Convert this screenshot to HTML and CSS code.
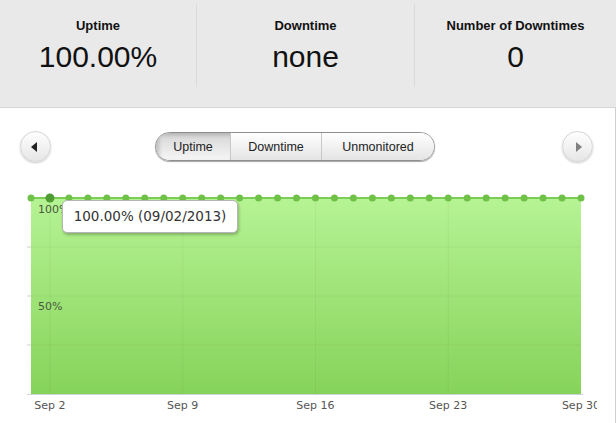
FILE: index.html
```html
<!DOCTYPE html>
<html lang="en">
<head>
    <meta charset="UTF-8">
    <title>Uptime report</title>
    <link rel="stylesheet" href="styles.css">
</head>
<body>

    <div class="stats">
        <div class="stat stat-first">
            <div class="stat-label">Uptime</div>
            <div class="stat-value">100.00%</div>
        </div>
        <div class="stat stat-mid">
            <div class="stat-label">Downtime</div>
            <div class="stat-value">none</div>
        </div>
        <div class="stat stat-last">
            <div class="stat-label">Number of Downtimes</div>
            <div class="stat-value">0</div>
        </div>
    </div>

    <div class="panel">
        <div class="toolbar">
            <span class="round-btn"><span class="arrow-left"></span></span>
            <div class="segments">
                <span class="seg seg-uptime active">Uptime</span>
                <span class="seg seg-down">Downtime</span>
                <span class="seg seg-unmon">Unmonitored</span>
            </div>
            <span class="round-btn"><span class="arrow-right"></span></span>
        </div>

        <div class="chart">
            <svg id="plot" width="597" height="238" viewBox="0 0 597 238"></svg>
            <div class="tooltip">100.00% (09/02/2013)</div>
        </div>
    </div>

    <script>
        // page y = svg y + 185
        var svg = document.getElementById("plot")
        var left = 31, right = 581, top_ = 12, bottom = 208
        var step = (right - left) / 29

        var html = ''
        html += '<defs><linearGradient id="fill" x1="0" y1="0" x2="0" y2="1">'
        html += '<stop offset="0" stop-color="#b6f394"/><stop offset="1" stop-color="#86d35a"/>'
        html += '</linearGradient></defs>'
        html += '<rect x="' + left + '" y="' + top_ + '" width="' + (right - left) + '" height="' + (bottom - top_) + '" fill="url(#fill)"/>'

        // grid
        ;[61, 110, 159].forEach(function(y) {
            html += '<line x1="' + left + '" x2="' + right + '" y1="' + y + '" y2="' + y + '" stroke="#000" stroke-opacity="0.04"/>'
            html += '<line x1="27" x2="' + left + '" y1="' + y + '" y2="' + y + '" stroke="#cfcfcf"/>'
        })
        var labels = ["Sep 2", "Sep 9", "Sep 16", "Sep 23", "Sep 30"]
        labels.forEach(function(t, i) {
            var x = left + step * (1 + i * 7)
            if (i < 4) {
                html += '<line x1="' + x + '" x2="' + x + '" y1="' + top_ + '" y2="' + bottom + '" stroke="#000" stroke-opacity="0.04"/>'
            }
            html += '<text class="xlabel" x="' + x + '" y="223" text-anchor="middle">' + t + '</text>'
        })
        html += '<line x1="27" x2="583" y1="208.5" y2="208.5" stroke="#cdd3d8"/>'
        html += '<text class="ylabel" x="38" y="27">100%</text>'
        html += '<text class="ylabel" x="38" y="124">50%</text>'

        // line and points
        html += '<line x1="' + left + '" x2="' + right + '" y1="' + top_ + '" y2="' + top_ + '" stroke="#7ccd55" stroke-width="2"/>'
        for (var i = 0; i < 30; i++) {
            var x = left + step * i
            if (i == 1) {
                html += '<circle cx="' + x + '" cy="' + top_ + '" r="4.5" fill="#519c32"/>'
            } else {
                html += '<circle cx="' + x + '" cy="' + top_ + '" r="3.5" fill="#6fc148"/>'
            }
        }
        svg.innerHTML = html
    </script>
</body>
</html>
```

FILE: styles.css
```css
body {
    margin: 0;
    background: #ffffff;
    font-family: "Liberation Sans", Arial, sans-serif;
    color: #111;
    overflow: hidden;
}

.stats {
    display: flex;
    align-items: flex-start;
    height: 107px;
    background: #e9e9e9;
    border-bottom: 1px solid #d5d5d5;
}

.stat {
    margin-top: 4px;
    height: 83px;
    padding-top: 14px;
    box-sizing: border-box;
    text-align: center;
}

.stat-first { width: 196px; }
.stat-mid { width: 218px; border-left: 1px solid #dadada; }
.stat-last { flex: 1; border-left: 1px solid #dadada; }

.stat-label {
    font-size: 13px;
    font-weight: bold;
    line-height: 15px;
}

.stat-value {
    margin-top: 7px;
    font-size: 30px;
    line-height: 34px;
}

.panel {
    border-right: 1px solid #cfcfcf;
    height: 315px;
}

.toolbar {
    display: flex;
    align-items: center;
    padding: 23px 22px 0 20px;
}

.round-btn {
    display: flex;
    align-items: center;
    justify-content: center;
    width: 29px;
    height: 29px;
    border-radius: 50%;
    border: 1px solid #d6d6d6;
    background: linear-gradient(#ffffff, #e6e6e6);
    box-shadow: 0 1px 2px rgba(0, 0, 0, 0.22);
}

.arrow-left {
    width: 0;
    height: 0;
    margin-left: -3px;
    border-top: 5px solid transparent;
    border-bottom: 5px solid transparent;
    border-right: 6px solid #222;
}

.arrow-right {
    width: 0;
    height: 0;
    margin-left: 3px;
    border-top: 5px solid transparent;
    border-bottom: 5px solid transparent;
    border-left: 6px solid #808080;
}

.segments {
    display: flex;
    margin: 0 auto 0 104px;
    height: 27px;
    border: 1px solid #8e8e8e;
    border-radius: 15px;
    overflow: hidden;
    box-shadow: 0 1px 1px rgba(0, 0, 0, 0.35);
}

.seg {
    display: flex;
    align-items: center;
    justify-content: center;
    font-size: 12.5px;
    color: #222;
    background: linear-gradient(#ffffff, #e4e4e4);
}

.seg-uptime { width: 74px; }
.seg-down { width: 90px; border-left: 1px solid #c8c8c8; }
.seg-unmon { width: 112px; border-left: 1px solid #c8c8c8; }

.seg.active {
    background: linear-gradient(#d6d6d6, #f6f6f6);
    box-shadow: inset 3px 2px 4px rgba(0, 0, 0, 0.18);
}

.chart {
    position: relative;
    margin-top: 24px;
    height: 238px;
}

#plot {
    display: block;
}

.xlabel, .ylabel {
    font-family: "DejaVu Sans", Verdana, sans-serif;
    font-size: 11px;
    fill: #555;
}

.ylabel {
    fill: #4a5a40;
}

.tooltip {
    position: absolute;
    left: 62px;
    top: 14px;
    width: 174px;
    height: 31px;
    box-sizing: content-box;
    background: #fff;
    border: 1px solid #b5b5b5;
    border-radius: 5px;
    box-shadow: 1px 2px 3px rgba(0, 0, 0, 0.25);
    font-family: "DejaVu Sans", Verdana, sans-serif;
    font-size: 13.5px;
    line-height: 31px;
    color: #333;
    text-align: center;
}
```
